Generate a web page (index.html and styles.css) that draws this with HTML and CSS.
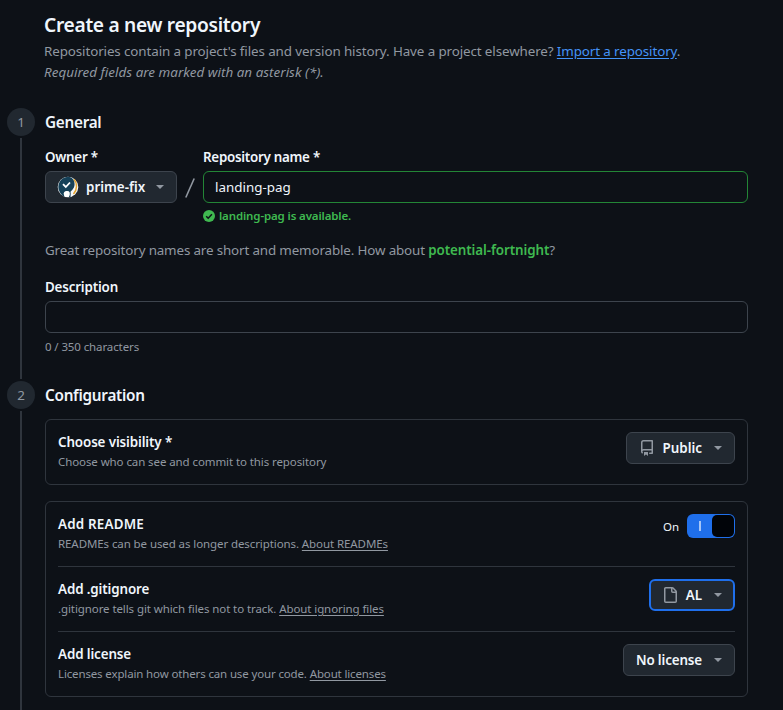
FILE: index.html
```html
<!DOCTYPE html>
<html lang="en">
<head>
<meta charset="utf-8">
<title>Create a new repository</title>
<link rel="stylesheet" href="styles.css">
</head>
<body>
<header class="page-head">
  <h1>Create a new repository</h1>
  <p>Repositories contain a project's files and version history. Have a project elsewhere? <a class="link-accent" href="#">Import a repository</a>.</p>
  <p class="note">Required fields are marked with an asterisk (*).</p>
</header>
<main>
  <section class="step">
    <div class="rail"><span class="num">1</span><span class="line"></span></div>
    <div class="body general">
      <h2>General</h2>
      <div class="name-row">
        <div class="owner">
          <label>Owner *</label>
          <button class="btn owner-btn" type="button">
            <svg class="avatar" width="22" height="22" viewBox="0 0 22 22"><circle cx="11" cy="11" r="10.300" fill="#f4f6f7"/><path d="M16.800 3.200C20.500 7 20.500 13 16.500 18" fill="none" stroke="#e3a32c" stroke-width="1.500"/><path d="M11 .7C15.500 1 18 4.500 17.500 9.200 17 13 14.500 14 13 16.500 11.500 14.800 8.500 15 7 17 6 19 3 17 1.800 14A10.300 10.300 0 0 1 11 .7Z" fill="#164158"/><path d="M6 8.200 8.800 11 13 6.500" fill="none" stroke="#fff" stroke-width="1.800"/><path d="M2.500 15Q4 19.500 8 20.800L6.500 17Z" fill="#164158"/><path d="M13 16.300 12.800 21" stroke="#164158" stroke-width="1.500"/><circle cx="9.800" cy="18" r="3" fill="#fff"/></svg>
            <span>prime-fix</span><i class="caret"></i>
          </button>
        </div>
        <svg class="slash" width="10" height="20" viewBox="0 0 10 20"><path d="M.8 19.500 9.200.5" stroke="#9198a1" stroke-width="1.600"/></svg>
        <div class="repo">
          <label>Repository name *</label>
          <div class="input valid">landing-pag</div>
          <div class="ok"><svg width="12" height="12" viewBox="0 0 12 12"><circle cx="6" cy="6" r="6" fill="#3fb950"/><path d="M3.200 6.200 5.200 8.200 8.900 4.300" fill="none" stroke="#0d1117" stroke-width="1.500"/></svg><span>landing-pag is available.</span></div>
        </div>
      </div>
      <p class="hint">Great repository names are short and memorable. How about <b>potential-fortnight</b>?</p>
      <label class="desc">Description</label>
      <div class="input"></div>
      <p class="count">0 / 350 characters</p>
    </div>
  </section>
  <section class="step last">
    <div class="rail"><span class="num">2</span><span class="line"></span></div>
    <div class="body">
      <h2>Configuration</h2>
      <div class="card">
        <div class="row">
          <div><h3>Choose visibility *</h3><p>Choose who can see and commit to this repository</p></div>
          <button class="btn" type="button"><svg class="icon" width="16" height="16" viewBox="0 0 16 16"><path d="M2 2.500A2.500 2.500 0 0 1 4.500 0h8.750a.75.75 0 0 1 .75.75v12.500a.75.75 0 0 1-.75.75h-2.500a.75.75 0 0 1 0-1.500h1.750v-2h-8a1 1 0 0 0-.714 1.700.75.75 0 1 1-1.072 1.050A2.495 2.495 0 0 1 2 11.500Zm10.500-1h-8a1 1 0 0 0-1 1v6.708A2.486 2.486 0 0 1 4.500 9h8ZM5 12.250a.25.25 0 0 1 .25-.25h3.500a.25.25 0 0 1 .25.25v3.250a.25.25 0 0 1-.4.200l-1.450-1.087a.249.249 0 0 0-.3 0L5.400 15.700a.25.25 0 0 1-.4-.2Z"/></svg><span>Public</span><i class="caret"></i></button>
        </div>
      </div>
      <div class="card">
        <div class="row">
          <div><h3 class="caps">Add README</h3><p>READMEs can be used as longer descriptions. <a href="#">About READMEs</a></p></div>
          <div class="toggle"><span>On</span><span class="switch"><i class="bar"></i><i class="knob"></i></span></div>
        </div>
        <div class="row">
          <div><h3>Add .gitignore</h3><p>.gitignore tells git which files not to track. <a href="#">About ignoring files</a></p></div>
          <button class="btn focus" type="button"><svg class="icon" width="16" height="16" viewBox="0 0 16 16"><path d="M2 1.750C2 .784 2.784 0 3.750 0h6.586c.464 0 .909.184 1.237.513l2.914 2.914c.329.328.513.773.513 1.237v9.586A1.750 1.750 0 0 1 13.250 16h-9.500A1.750 1.750 0 0 1 2 14.250Zm1.750-.25a.25.25 0 0 0-.25.25v12.500c0 .138.112.25.25.25h9.500a.25.25 0 0 0 .25-.25V6h-2.750A1.750 1.750 0 0 1 9 4.250V1.500Zm6.750.062V4.250c0 .138.112.25.25.25h2.688l-.011-.013-2.914-2.914-.013-.011Z"/></svg><span>AL</span><i class="caret"></i></button>
        </div>
        <div class="row">
          <div><h3>Add license</h3><p class="tight">Licenses explain how others can use your code. <a href="#">About licenses</a></p></div>
          <button class="btn" type="button"><span class="tight">No license</span><i class="caret"></i></button>
        </div>
      </div>
    </div>
  </section>
</main>
</body>
</html>
```
FILE: styles.css
```css
* { box-sizing: border-box; }
body {
  margin: 0;
  height: 710px;
  overflow: hidden;
  background: #0d1117;
  color: #f0f6fc;
  font: 13.4px/21px "Noto Sans", "Open Sans", sans-serif;
}
h1, h2, h3, p { margin: 0; }
h1, h2, h3, label, .btn { font-weight: 600; }
a { color: inherit; text-underline-offset: 2px; }

.page-head { padding: 9px 0 0 44px; height: 108px; color: #9198a1; white-space: nowrap; letter-spacing: -0.11px; }
.page-head h1 { color: #f0f6fc; font-size: 19.2px; line-height: 32px; letter-spacing: -0.31px; }
.link-accent { color: #4493f8; }
.note { font-style: italic; letter-spacing: 0.03px; }

.step { display: flex; gap: 10px; padding-left: 7px; }
.last { height: 329px; }
.rail { display: flex; flex-direction: column; align-items: center; width: 28px; }
.num {
  width: 28px; height: 28px; border-radius: 50%;
  background: #212830; color: #9198a1; text-align: center; line-height: 29px;
}
.line { flex: 1; width: 2px; margin: 2px 0; background: #2f353d; }
.last .line { margin-bottom: 0; }
.body { width: 703px; white-space: nowrap; }
.general { height: 273px; }
h2 { font-size: 15.3px; line-height: 28px; letter-spacing: -0.28px; }
label { display: block; line-height: 21px; letter-spacing: -0.28px; }
.desc { letter-spacing: -0.18px; }

.name-row { display: flex; margin-top: 11px; }
.owner { width: 132px; }
.slash { margin: 31px 8px 0 8px; }
.repo { flex: 1; }
.btn {
  display: flex; align-items: center; height: 32px; padding: 0 12px;
  border: 1px solid #3d444d; border-radius: 6px;
  background: #212830; color: #f0f6fc; font-family: inherit; font-size: 13.4px; line-height: 20px;
}
.owner-btn { width: 132px; margin-top: 3px; padding-left: 11px; }
.avatar { margin-right: 7px; }
.caret {
  margin-left: auto; border: 4px solid transparent; border-top-color: #9198a1; border-bottom: 0;
}
.input {
  height: 32px; margin-top: 3px; padding: 0 11px; border: 1px solid #3d444d; border-radius: 6px; line-height: 31px;
}
.valid { border-color: #238636; }
.ok {
  display: flex; align-items: center; gap: 4px; margin-top: 4px;
  color: #3fb950; font-size: 11.5px; font-weight: 600; line-height: 18px; letter-spacing: -0.13px;
}
.hint { margin-top: 15px; color: #9198a1; letter-spacing: -0.15px; }
.hint b { color: #3fb950; font-weight: 600; letter-spacing: -0.09px; }
.hint + label { margin-top: 16px; }
.count { margin-top: 5px; color: #9198a1; font-size: 11.5px; line-height: 18px; letter-spacing: -0.11px; }

.card { margin-top: 16px; padding: 0 12px; border: 1px solid #2f353d; border-radius: 6px; }
h2 + .card { margin-top: 10px; }
.row { display: flex; justify-content: space-between; height: 65px; padding-top: 12px; }
.row:first-child { height: 64px; }
.row + .row { border-top: 1px solid #2f353d; }
h3 { font-size: 13.4px; line-height: 20px; letter-spacing: -0.12px; }
h3.caps { letter-spacing: 0.2px; }
.row p { color: #9198a1; font-size: 11.5px; line-height: 19px; letter-spacing: -0.09px; }
.row .tight { letter-spacing: -0.14px; }
.icon { margin: 0 8px 0 0; fill: #9198a1; }
.row .btn .caret { margin-left: 12px; }
.row .focus { padding: 0 11px; border: 2px solid #1f6feb; }
.toggle { display: flex; gap: 8px; height: 24px; font-size: 11.5px; line-height: 25px; }
.switch {
  display: flex; align-items: center; justify-content: space-between; width: 48px; height: 24px;
  padding: 0 1px 0 12px; border-radius: 6px; background: #1f6feb;
}
.bar { width: 2px; height: 10px; background: #a5c5f7; }
.knob { width: 22px; height: 22px; border-radius: 5px; background: #010409; }
```
